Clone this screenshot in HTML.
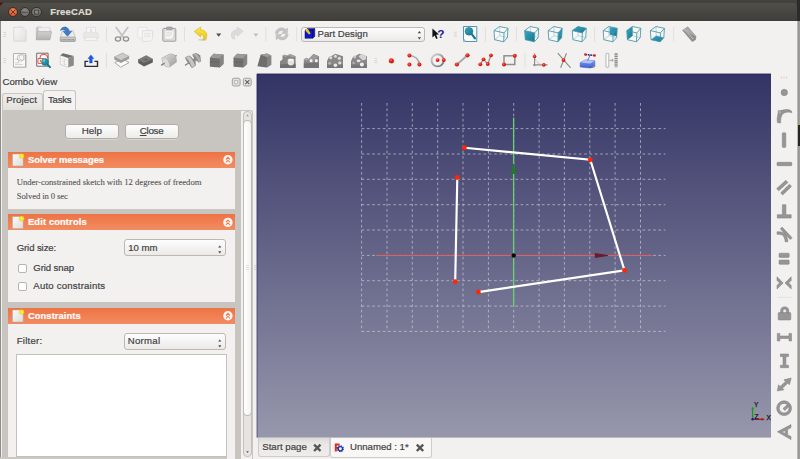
<!DOCTYPE html>
<html>
<head>
<meta charset="utf-8">
<title>FreeCAD</title>
<style>
html,body{margin:0;padding:0;}
body{width:800px;height:459px;overflow:hidden;position:relative;background:#f2f1f0;font-family:"Liberation Sans",sans-serif;font-size:9.6px;color:#424242;-webkit-text-stroke:0.2px currentColor;}
.abs{position:absolute;}
.t{position:absolute;white-space:nowrap;line-height:12px;height:12px;}
#topstrip{left:0;top:0;width:800px;height:8px;background:#42413c;}
#titlebar{left:0;top:2.7px;width:797.2px;height:18px;background:linear-gradient(#504f4a,#3e3d39);border-radius:4px 4px 0 0;}
#rstrip{left:797.2px;top:0;width:2.8px;height:459px;background:linear-gradient(90deg,#cfccc8 0,#8e8e8e 55%,#a9a8a6 100%);}
#lborder{left:0;top:20.5px;width:1.2px;height:439px;background:#8c8b88;}
.wbtn{position:absolute;width:10.6px;height:10.6px;border-radius:50%;top:6.8px;box-sizing:border-box;border:0.8px solid #33322e;}
.hdr{position:absolute;left:8px;width:227.2px;height:16.2px;background:linear-gradient(#ee7344,#f28c62);}
.hdr .t{left:20px;top:2.2px;color:#fff;font-weight:bold;font-size:9.3px;}
.pnl{position:absolute;left:8px;width:227.2px;background:#f2f1f0;}
.btn{position:absolute;height:15.8px;border:1px solid #b2ada6;border-radius:3px;background:linear-gradient(#fdfdfd,#ececeb);box-sizing:border-box;box-shadow:0 0.6px 0.6px rgba(255,255,255,0.6);}
.combo{position:absolute;height:16.2px;border:1px solid #bdb8b1;border-radius:3px;background:linear-gradient(#fdfdfd,#ebeae9);box-sizing:border-box;}
.chk{position:absolute;left:18.2px;width:9.3px;height:9px;border:1px solid #b9b4ad;border-radius:2px;background:#fff;box-sizing:border-box;}
</style>
</head>
<body>
<div id="topstrip" class="abs"></div>
<div id="rstrip" class="abs"></div>
<div class="abs" style="left:797.2px;top:0;width:2.8px;height:21px;background:#2b2b29;"></div>
<div class="abs" style="left:797.6px;top:124px;width:2.4px;height:21px;background:#262624;border-top:1px solid #b8a820;"></div>
<div id="titlebar" class="abs"></div>
<div class="wbtn" style="left:7.7px;background:radial-gradient(circle at 50% 35%,#f08a5e,#e2562c 70%,#b8431f);"></div>
<div class="wbtn" style="left:19.5px;background:radial-gradient(circle at 50% 35%,#8b8a84,#6f6e68 70%,#55544f);"></div>
<div class="wbtn" style="left:31.3px;background:radial-gradient(circle at 50% 35%,#8b8a84,#6f6e68 70%,#55544f);"></div>
<div class="t" style="left:50.3px;top:5.9px;color:#dfdbd2;font-weight:bold;font-size:9.5px;letter-spacing:0.14px;">FreeCAD</div>
<div id="lborder" class="abs"></div>

<!-- dock title -->
<div class="t" style="left:2.4px;top:76.1px;font-size:9.7px;">Combo View</div>

<!-- tab widget -->
<div class="abs" style="left:2px;top:109.5px;width:251px;height:349.5px;box-sizing:border-box;border:1px solid #c9c5bf;border-bottom:none;border-radius:0 3px 0 0;background:#f2f1f0;"></div>
<div class="abs" style="left:2.4px;top:110.6px;width:238.4px;height:348.4px;background:#c8c4bf;"></div>
<div class="abs" style="left:2px;top:93px;width:41.2px;height:17px;box-sizing:border-box;border:1px solid #c9c5bf;border-bottom:none;border-radius:3px 3px 0 0;background:linear-gradient(#efeeec,#e3e1de);"></div>
<div class="abs" style="left:43.4px;top:90.3px;width:32.8px;height:20px;box-sizing:border-box;border:1px solid #c9c5bf;border-bottom:none;border-radius:3px 3px 0 0;background:#f4f3f2;"></div>
<div class="t" style="left:6.2px;top:93.8px;font-size:9.7px;letter-spacing:0.09px;">Project</div>
<div class="t" style="left:48px;top:93.6px;font-size:9.7px;letter-spacing:-0.3px;">Tasks</div>

<!-- scrollbar -->
<div class="abs" style="left:243.2px;top:111px;width:8.6px;height:345.8px;box-sizing:border-box;border:1px solid #c4c0ba;border-radius:4px;background:#e6e4e1;"></div>
<div class="abs" style="left:243.2px;top:119.6px;width:8.6px;height:296px;box-sizing:border-box;border:1px solid #bdb9b3;border-radius:4px;background:linear-gradient(90deg,#ffffff,#f3f2f1);"></div>

<!-- buttons -->
<div class="btn" style="left:64.8px;top:123.5px;width:54px;"></div>
<div class="btn" style="left:124.5px;top:123.5px;width:54px;"></div>
<div class="t" style="left:81.8px;top:125.3px;font-size:9.8px;">Help</div>
<div class="t" style="left:139.8px;top:125.3px;font-size:9.8px;letter-spacing:-0.3px;"><span style="text-decoration:underline">C</span>lose</div>

<!-- Solver messages -->
<div class="hdr" style="top:151.5px;"><div class="t">Solver messages</div></div>
<div class="pnl" style="top:167.7px;height:41px;"></div>
<div class="t" style="left:16.7px;top:175.9px;font-family:'Liberation Serif',serif;font-size:8.7px;letter-spacing:-0.035px;color:#555;-webkit-text-stroke:0.1px #555;">Under-constrained sketch with 12 degrees of freedom</div>
<div class="t" style="left:16.7px;top:189.9px;font-family:'Liberation Serif',serif;font-size:8.7px;letter-spacing:-0.12px;color:#555;-webkit-text-stroke:0.1px #555;">Solved in 0 sec</div>

<!-- Edit controls -->
<div class="hdr" style="top:214.1px;"><div class="t" style="letter-spacing:0.15px;">Edit controls</div></div>
<div class="pnl" style="top:230.3px;height:71.6px;"></div>
<div class="t" style="left:16.7px;top:241.8px;letter-spacing:-0.11px;">Grid size:</div>
<div class="combo" style="left:124.4px;top:239.4px;width:101.4px;"></div>
<div class="t" style="left:128.2px;top:241.8px;">10 mm</div>
<div class="chk" style="top:263.5px;"></div>
<div class="t" style="left:33.3px;top:261.5px;letter-spacing:-0.1px;">Grid snap</div>
<div class="chk" style="top:281.8px;"></div>
<div class="t" style="left:33.3px;top:280px;letter-spacing:0.2px;">Auto constraints</div>

<!-- Constraints -->
<div class="hdr" style="top:307.5px;"><div class="t" style="letter-spacing:0.1px;">Constraints</div></div>
<div class="pnl" style="top:323.7px;height:135.3px;"></div>
<div class="t" style="left:16.7px;top:335.4px;letter-spacing:0.23px;">Filter:</div>
<div class="combo" style="left:124.4px;top:333.4px;width:101.4px;"></div>
<div class="t" style="left:127.8px;top:335.4px;letter-spacing:0.27px;">Normal</div>
<div class="abs" style="left:16.4px;top:354.2px;width:210.4px;height:103px;box-sizing:border-box;border:1px solid #c4c0ba;background:#fff;"></div>
<div class="abs" style="left:0;top:456.8px;width:227px;height:2.2px;background:#cbc8c4;"></div>

<!-- combobox workbench -->
<div class="combo" style="left:301.3px;top:26.8px;width:124px;height:15.2px;"></div>
<div class="t" style="left:317.6px;top:28.3px;font-size:9.6px;">Part Design</div>

<!-- bottom tabs -->
<div class="abs" style="left:257.5px;top:438px;width:72.5px;height:18.6px;box-sizing:border-box;border:1px solid #cfccc7;border-top:none;border-radius:0 0 3px 3px;background:linear-gradient(#dddbd8,#ebe9e7 35%,#efedeb);"></div>
<div class="abs" style="left:329.6px;top:437.5px;width:102.4px;height:20px;box-sizing:border-box;border:1px solid #cfccc7;border-top:none;border-radius:0 0 3px 3px;background:#f8f7f6;"></div>
<div class="t" style="left:262.2px;top:441.3px;font-size:9.7px;">Start page</div>
<div class="t" style="left:350px;top:441.3px;font-size:9.6px;">Unnamed : 1*</div>

<svg class="abs" style="left:0;top:0;" width="800" height="459" viewBox="0 0 800 459">
<defs>
<linearGradient id="vbg" x1="0" y1="0" x2="0" y2="1"><stop offset="0" stop-color="#333365"/><stop offset="1" stop-color="#9797ac"/></linearGradient>
<linearGradient id="tealg" x1="0" y1="0" x2="1" y2="1"><stop offset="0" stop-color="#3aa6c0"/><stop offset="1" stop-color="#14788f"/></linearGradient>
</defs>
<!-- VIEWPORT -->
<rect x="256.700" y="73.700" width="514.300" height="363.900" fill="url(#vbg)"/>
<path d="M257.100 437.600V74.100H771" fill="none" stroke="#1a1a58" stroke-opacity="0.6" stroke-width="0.800"/>
<g id="grid" stroke="#d8d8de" stroke-opacity="0.72" stroke-width="0.850" stroke-dasharray="2.700 2.600" fill="none">
<path d="M361.6 103V331.4M387 103V331.4M412.3 103V331.4M437.7 103V331.4M463 103V331.4M488.4 103V331.4M513.7 103V331.4M539.1 103V331.4M564.4 103V331.4M589.8 103V331.4M615.1 103V331.4M640.5 103V331.4"/>
<path d="M361.6 128.6H665.5M361.6 154H665.5M361.6 179.3H665.5M361.6 204.7H665.5M361.6 230H665.5M361.6 255.4H665.5M361.6 280.7H665.5M361.6 306.1H665.5M361.6 331.4H665.5"/>
</g>
<line x1="376" y1="255.500" x2="652" y2="255.500" stroke="#e2605a" stroke-width="1.100"/>
<line x1="513.6" y1="117.6" x2="513.6" y2="307" stroke="#66d468" stroke-width="1.3"/>
<path d="M594.8 252.9L594.8 258.1L608 255.9L608 255.1Z" fill="#6a1c2a"/>
<path d="M510.9 174L516.3 174L514 163.7L513.2 163.7Z" fill="#1f7a2a"/>
<circle cx="513.7" cy="255.5" r="2.2" fill="#0a0a14"/>
<g stroke="#ffffff" stroke-width="2.150" stroke-linecap="round" fill="none">
<path d="M464.4 147.7L590.3 159.8L624.5 270.4L478.4 292.1"/>
<path d="M457.3 177.5L455.2 281.6"/>
</g>
<g fill="#ff2600">
<circle cx="464.4" cy="147.7" r="2.4"/><circle cx="590.3" cy="159.8" r="2.4"/><circle cx="624.5" cy="270.4" r="2.4"/><circle cx="478.4" cy="292.1" r="2.4"/><circle cx="457.3" cy="177.5" r="2.4"/><circle cx="455.2" cy="281.6" r="2.4"/>
</g>
<!-- axis cross -->
<line x1="752.600" y1="419.300" x2="752.600" y2="408.500" stroke="#12a012" stroke-width="1.300"/>
<path d="M751.200 409.500l1.400-3l1.400 3z" fill="#12a012"/>
<line x1="752.600" y1="419.300" x2="762.500" y2="419.300" stroke="#a81c1c" stroke-width="1.300"/>
<path d="M761.500 417.900l3.600 1.400l-3.600 1.400z" fill="#a81c1c"/>
<circle cx="752.600" cy="419.300" r="1.200" fill="#1818a8"/>
<g font-family="Liberation Sans, sans-serif" font-size="6.600" fill="#181820" stroke="#181820" stroke-width="0.250">
<text x="753.900" y="406.900">Y</text><text x="754.600" y="418.700">Z</text><text x="766.500" y="419.700">X</text>
</g>
<path d="M0 2.700h3.200l-3.200 3.200z" fill="#5a0a10"/>
<path d="M10.800 9.900l4.300 4.300M15.100 9.900l-4.300 4.300" stroke="#5a2410" stroke-width="0.900" stroke-linecap="round"/>
<path d="M22.500 12.300h4.400" stroke="#45443f" stroke-width="1.100" stroke-linecap="round"/>
<rect x="34.500" y="10.100" width="4.200" height="4.200" fill="none" stroke="#45443f" stroke-width="0.900"/>
<line x1="106.5" y1="27" x2="106.5" y2="41.6" stroke="#e1dfdc" stroke-width="1"/>
<line x1="184.5" y1="27" x2="184.5" y2="41.6" stroke="#e1dfdc" stroke-width="1"/>
<line x1="265.9" y1="27" x2="265.9" y2="41.6" stroke="#e1dfdc" stroke-width="1"/>
<line x1="296.7" y1="27" x2="296.7" y2="41.6" stroke="#e1dfdc" stroke-width="1"/>
<line x1="485.4" y1="27" x2="485.4" y2="41.6" stroke="#e1dfdc" stroke-width="1"/>
<line x1="516.4" y1="27" x2="516.4" y2="41.6" stroke="#e1dfdc" stroke-width="1"/>
<line x1="594.6" y1="27" x2="594.6" y2="41.6" stroke="#e1dfdc" stroke-width="1"/>
<line x1="673.7" y1="27" x2="673.7" y2="41.6" stroke="#e1dfdc" stroke-width="1"/>
<line x1="106.5" y1="53" x2="106.5" y2="67.6" stroke="#e1dfdc" stroke-width="1"/>
<line x1="525" y1="53" x2="525" y2="67.6" stroke="#e1dfdc" stroke-width="1"/>
<path d="M3.4 32.5h2.8M3.4 34.5h2.8M3.4 36.5h2.8" stroke="#cfccc8" stroke-width="0.7"/>
<path d="M3.4 58.5h2.8M3.4 60.5h2.8M3.4 62.5h2.8" stroke="#cfccc8" stroke-width="0.7"/>
<path d="M453.90000000000003 32.3h2.8M453.90000000000003 34.3h2.8M453.90000000000003 36.3h2.8" stroke="#cfccc8" stroke-width="0.7"/>
<path d="M374.40000000000003 58.6h2.8M374.40000000000003 60.6h2.8M374.40000000000003 62.6h2.8" stroke="#cfccc8" stroke-width="0.7"/>
<path d="M781.5 76.4v2.6M784 76.4v2.6M786.5 76.4v2.6" stroke="#cfccc8" stroke-width="0.7"/>
<g transform="translate(494 26.1)" fill="none" stroke-linejoin="round"><path d="M0.0 4.5L10.0 6.8L9.7 15.7L0.6 13.6ZM0.0 4.5L5.6 0.4L14.0 2.2L10.0 6.8M14.0 2.2L13.4 11.6L9.7 15.7" fill="#fbfdfd" fill-opacity="0.6" stroke="none"/><path d="M5.8 9.6L5.6 0.4M5.8 9.6L13.4 11.6M5.8 9.6L0.6 13.6" stroke="#8fc0cb" stroke-width="0.6"/><path d="M0.0 4.5L10.0 6.8L9.7 15.7L0.6 13.6ZM0.0 4.5L5.6 0.4L14.0 2.2L10.0 6.8M14.0 2.2L13.4 11.6L9.7 15.7" stroke="#4393a6" stroke-width="0.850"/></g>
<g transform="translate(524.7 26.1)" fill="none" stroke-linejoin="round"><path d="M0.0 4.5L10.0 6.8L9.7 15.7L0.6 13.6ZM0.0 4.5L5.6 0.4L14.0 2.2L10.0 6.8M14.0 2.2L13.4 11.6L9.7 15.7" fill="#fbfdfd" fill-opacity="0.6" stroke="none"/><path d="M5.8 9.6L5.6 0.4M5.8 9.6L13.4 11.6M5.8 9.6L0.6 13.6" stroke="#8fc0cb" stroke-width="0.6"/><path d="M0.0 4.5L10.0 6.8L9.7 15.7L0.6 13.6Z" fill="url(#tealg)" stroke="none"/><path d="M0.0 4.5L10.0 6.8L9.7 15.7L0.6 13.6ZM0.0 4.5L5.6 0.4L14.0 2.2L10.0 6.8M14.0 2.2L13.4 11.6L9.7 15.7" stroke="#4393a6" stroke-width="0.850"/></g>
<g transform="translate(548.2 26.1)" fill="none" stroke-linejoin="round"><path d="M0.0 4.5L10.0 6.8L9.7 15.7L0.6 13.6ZM0.0 4.5L5.6 0.4L14.0 2.2L10.0 6.8M14.0 2.2L13.4 11.6L9.7 15.7" fill="#fbfdfd" fill-opacity="0.6" stroke="none"/><path d="M5.8 9.6L5.6 0.4M5.8 9.6L13.4 11.6M5.8 9.6L0.6 13.6" stroke="#8fc0cb" stroke-width="0.6"/><path d="M10.0 6.8L14.0 2.2L13.4 11.6L9.7 15.7Z" fill="url(#tealg)" stroke="none"/><path d="M0.0 4.5L10.0 6.8L9.7 15.7L0.6 13.6ZM0.0 4.5L5.6 0.4L14.0 2.2L10.0 6.8M14.0 2.2L13.4 11.6L9.7 15.7" stroke="#4393a6" stroke-width="0.850"/></g>
<g transform="translate(572.3 26.1)" fill="none" stroke-linejoin="round"><path d="M0.0 4.5L10.0 6.8L9.7 15.7L0.6 13.6ZM0.0 4.5L5.6 0.4L14.0 2.2L10.0 6.8M14.0 2.2L13.4 11.6L9.7 15.7" fill="#fbfdfd" fill-opacity="0.6" stroke="none"/><path d="M5.8 9.6L5.6 0.4M5.8 9.6L13.4 11.6M5.8 9.6L0.6 13.6" stroke="#8fc0cb" stroke-width="0.6"/><path d="M0.0 4.5L5.6 0.4L14.0 2.2L10.0 6.8Z" fill="url(#tealg)" stroke="none"/><path d="M0.0 4.5L10.0 6.8L9.7 15.7L0.6 13.6ZM0.0 4.5L5.6 0.4L14.0 2.2L10.0 6.8M14.0 2.2L13.4 11.6L9.7 15.7" stroke="#4393a6" stroke-width="0.850"/></g>
<g transform="translate(603.2 26.1)" fill="none" stroke-linejoin="round"><path d="M0.0 4.5L10.0 6.8L9.7 15.7L0.6 13.6ZM0.0 4.5L5.6 0.4L14.0 2.2L10.0 6.8M14.0 2.2L13.4 11.6L9.7 15.7" fill="#fbfdfd" fill-opacity="0.6" stroke="none"/><path d="M5.8 9.6L5.6 0.4M5.8 9.6L13.4 11.6M5.8 9.6L0.6 13.6" stroke="#8fc0cb" stroke-width="0.6"/><path d="M6.4 1.0L14.0 2.2L13.6 10.2L6.4 8.6Z" fill="url(#tealg)" stroke="none"/><path d="M0.0 4.5L10.0 6.8L9.7 15.7L0.6 13.6ZM0.0 4.5L5.6 0.4L14.0 2.2L10.0 6.8M14.0 2.2L13.4 11.6L9.7 15.7" stroke="#4393a6" stroke-width="0.850"/></g>
<g transform="translate(626.8 26.1)" fill="none" stroke-linejoin="round"><path d="M0.0 4.5L10.0 6.8L9.7 15.7L0.6 13.6ZM0.0 4.5L5.6 0.4L14.0 2.2L10.0 6.8M14.0 2.2L13.4 11.6L9.7 15.7" fill="#fbfdfd" fill-opacity="0.6" stroke="none"/><path d="M5.8 9.6L5.6 0.4M5.8 9.6L13.4 11.6M5.8 9.6L0.6 13.6" stroke="#8fc0cb" stroke-width="0.6"/><path d="M0.0 4.5L5.6 0.4L5.8 9.6L0.6 13.6Z" fill="url(#tealg)" stroke="none"/><path d="M0.0 4.5L10.0 6.8L9.7 15.7L0.6 13.6ZM0.0 4.5L5.6 0.4L14.0 2.2L10.0 6.8M14.0 2.2L13.4 11.6L9.7 15.7" stroke="#4393a6" stroke-width="0.850"/></g>
<g transform="translate(650.4 26.1)" fill="none" stroke-linejoin="round"><path d="M0.0 4.5L10.0 6.8L9.7 15.7L0.6 13.6ZM0.0 4.5L5.6 0.4L14.0 2.2L10.0 6.8M14.0 2.2L13.4 11.6L9.7 15.7" fill="#fbfdfd" fill-opacity="0.6" stroke="none"/><path d="M5.8 9.6L5.6 0.4M5.8 9.6L13.4 11.6M5.8 9.6L0.6 13.6" stroke="#8fc0cb" stroke-width="0.6"/><path d="M0.6 13.6L9.7 15.7L13.4 11.6L5.8 9.6Z" fill="url(#tealg)" stroke="none"/><path d="M0.0 4.5L10.0 6.8L9.7 15.7L0.6 13.6ZM0.0 4.5L5.6 0.4L14.0 2.2L10.0 6.8M14.0 2.2L13.4 11.6L9.7 15.7" stroke="#4393a6" stroke-width="0.850"/></g>
<!-- row1 left icons -->
<defs>
<linearGradient id="pg" x1="0" y1="0" x2="1" y2="1"><stop offset="0" stop-color="#f7f7f7"/><stop offset="1" stop-color="#e2e2e2"/></linearGradient>
<linearGradient id="fold" x1="0" y1="0" x2="0" y2="1"><stop offset="0" stop-color="#d0d0d0"/><stop offset="1" stop-color="#b2b2b2"/></linearGradient>
<linearGradient id="drv" x1="0" y1="0" x2="0" y2="1"><stop offset="0" stop-color="#d9d9d9"/><stop offset="1" stop-color="#a8a8a8"/></linearGradient>
<linearGradient id="yel" x1="0" y1="0" x2="0" y2="1"><stop offset="0" stop-color="#fbe84a"/><stop offset="1" stop-color="#e9c616"/></linearGradient>
<linearGradient id="dk" x1="0" y1="0" x2="1" y2="1"><stop offset="0" stop-color="#8e8e8e"/><stop offset="1" stop-color="#5a5a5a"/></linearGradient>
<radialGradient id="redb" cx="0.4" cy="0.35" r="0.7"><stop offset="0" stop-color="#ff6a5a"/><stop offset="0.5" stop-color="#ee1c12"/><stop offset="1" stop-color="#b40c08"/></radialGradient>
</defs>
<!-- new -->
<path d="M13.8 27.2h9.2l3 3v10.9h-12.2z" fill="url(#pg)" stroke="#d2d2d2" stroke-width="0.8"/>
<path d="M23 27.2v3h3" fill="#fafafa" stroke="#d6d6d6" stroke-width="0.6"/>
<!-- open -->
<path d="M36.3 28.2l1-1.3h4l1 1.3h7.6v11.4h-13.6z" fill="#c6c6c6" stroke="#b8b8b8" stroke-width="0.600"/>
<path d="M38.6 27.4h11.2v8h-11.2z" fill="#efefef" stroke="#d0d0d0" stroke-width="0.5"/>
<path d="M37.6 31.6h14l-1.8 8.2h-13.6z" fill="url(#fold)" stroke="#a6a6a6" stroke-width="0.6"/>
<!-- save -->
<path d="M62.600 30.800h10.400l2.400 6.600h-15.200z" fill="#ececec" stroke="#b4b4b4" stroke-width="0.700"/>
<rect x="60.200" y="37.200" width="15.200" height="4.300" rx="0.800" fill="url(#drv)" stroke="#9a9a9a" stroke-width="0.700"/>
<path d="M61.500 39.500h12.600" stroke="#7e7e7e" stroke-width="0.700" stroke-dasharray="0.800 0.500"/>
<path d="M60.600 30.400c0.600-3.400 5.600-4.800 8-1.200l0.500 2.200h2.500l-4.100 4.800l-4.200-4.800h2.500c-0.600-2-3.400-2.600-5.200-1z" fill="#3f7cc4" stroke="#2a5ea4" stroke-width="0.600" stroke-linejoin="round"/>
<!-- print -->
<rect x="86.400" y="27.600" width="9.200" height="5.800" fill="#f6f6f6" stroke="#d8d8d8" stroke-width="0.600"/>
<path d="M91 29v3.400" stroke="#d4d4d4" stroke-width="1.200"/>
<rect x="83.600" y="32.800" width="14.600" height="6" rx="1.400" fill="#e9e9e9" stroke="#d6d6d6" stroke-width="0.600"/>
<rect x="85" y="37.200" width="11.800" height="3.400" fill="#f3f3f3" stroke="#d8d8d8" stroke-width="0.600"/>
<!-- cut -->
<g stroke="#a2a2a2" fill="none" stroke-width="1.200" stroke-linecap="round">
<path d="M116.200 27.400l7.400 10.200M127.800 27.400l-7.400 10.200" stroke="#c2c2c2" stroke-width="1.700"/>
<ellipse cx="118" cy="39" rx="2.600" ry="2.100" stroke="#909090" stroke-width="1.300"/>
<ellipse cx="126" cy="39" rx="2.600" ry="2.100" stroke="#909090" stroke-width="1.300"/>
</g>
<!-- copy -->
<path d="M138 27.4h9v10.6h-9z" fill="#f7f7f7" stroke="#dedede" stroke-width="0.7"/>
<path d="M142.2 30.6h10.4v8.2l-2.4 2.6h-8z" fill="#f4f4f4" stroke="#d9d9d9" stroke-width="0.7"/>
<path d="M144 33.4h6.6M144 35h6.6M144 36.6h6.6" stroke="#e0e0e0" stroke-width="0.7"/>
<!-- paste -->
<rect x="162.800" y="28.400" width="13" height="12.800" rx="0.800" fill="#dedede" stroke="#9e9e9e" stroke-width="1"/>
<path d="M164.6 30.2h9.4v6.6l-2.6 2.6h-6.8z" fill="#f3f3f3" stroke="#bdbdbd" stroke-width="0.5"/>
<rect x="166.4" y="27" width="5.8" height="2.6" rx="0.8" fill="#aaaaaa" stroke="#8e8e8e" stroke-width="0.6"/>
<path d="M166 32.4h6M166 34h6M166 35.6h4.4" stroke="#d4d4d4" stroke-width="0.6"/>
<!-- undo -->
<ellipse cx="202.6" cy="39.8" rx="4.6" ry="1.1" fill="#000" fill-opacity="0.12"/>
<path d="M194.2 31.4l6.4-4.4v2.8c5.4 0.2 7.4 4.6 5.6 8.6c-0.8 1.2-2.2 1.6-3.6 1.4c1.6-1.6 1.6-5-2-5.4v2.6z" fill="url(#yel)" stroke="#d8b412" stroke-width="0.6" stroke-linejoin="round"/>
<path d="M216.2 33.4h5l-2.5 3.3z" fill="#4a4a4a"/>
<!-- redo disabled -->
<path d="M243.2 31.2l-6-4.2v2.8c-5 0.2-6.8 4.2-5.2 8c0.8 1 2 1.4 3.2 1.2c-1.4-1.6-1.4-4.6 2-5v2.4z" fill="#dcdcdc" stroke="#cfcfcf" stroke-width="0.6" stroke-linejoin="round"/>
<path d="M253.5 33.4h4.8l-2.4 3.3z" fill="#bdbdbd"/>
<!-- refresh disabled -->
<g fill="#c4c4c4" stroke="#b4b4b4" stroke-width="0.5" stroke-linejoin="round">
<path d="M275.4 33.4c0.4-5 7-7.4 10.2-3.8l1.8-1.6v5.4h-5.6l1.8-1.8c-1.8-2-5-1.2-5.6 1.8z"/>
<path d="M288.2 34.4c-0.4 5-7 7.4-10.2 3.8l-1.8 1.6v-5.4h5.6l-1.8 1.8c1.8 2 5 1.2 5.6-1.8z"/>
</g>
<!-- workbench combobox icon -->
<path d="M305 30.4l2.4-1.8h7.4v7.8l-2.2 1.9h-7.6z" fill="#1018c8" stroke="#080c60" stroke-width="0.5"/>
<path d="M305 30.4h7.6v7.9M312.6 30.4l2.2-1.8" fill="none" stroke="#050830" stroke-width="0.6"/>
<path d="M305.4 29l2.6 0l2.6 4.4l-1.6 1.2l-3.4-3.6z" fill="#e8c820"/>
<path d="M417.700 33.300h3.400l-1.700-2.200zM417.700 37.200h3.400l-1.700 2.200z" fill="#4a4a4a"/>
<!-- whats this -->
<path d="M432.4 28.6l0 8.8l2.2-2l1.6 3.6l1.5-0.7l-1.6-3.5l2.9-0.2z" fill="#111"/>
<text x="437.2" y="37.5" font-family="Liberation Sans, sans-serif" font-weight="bold" font-size="11.8" fill="#1a1aa0">?</text>
<!-- zoom fit -->
<path d="M463.5 26.5h13.3v15h-10.8l-2.5-2.5z" fill="#fbfbfb" stroke="#3c8fa3" stroke-width="0.9" stroke-linejoin="round"/>
<path d="M463.5 39v2.5h2.5" fill="none" stroke="#3c8fa3" stroke-width="0.6"/>
<circle cx="469" cy="31.300" r="3.900" fill="url(#tealg)" stroke="#14788f" stroke-width="0.600"/>
<path d="M472 34.400l3 3.900" stroke="#14788f" stroke-width="2.200" stroke-linecap="round"/>
<!-- ruler -->
<path d="M682.6 30.2l5.2-3.4l8.2 9.6l-0.6 3.4l-3.2 1.8z" fill="#a9a9a9" stroke="#8d8d8d" stroke-width="0.6" stroke-linejoin="round"/>
<path d="M682.6 30.2l9.6 11.4l3.2-1.8l0.6-3.4" fill="#8f8f8f" stroke="none"/>
<path d="M684.6 29.2l8.6 10" stroke="#c9c9c9" stroke-width="1.6" stroke-dasharray="0.8 0.9"/>

<!-- row2 icons -->
<defs>
<linearGradient id="bx1" x1="0" y1="0" x2="0" y2="1"><stop offset="0" stop-color="#8a8a8a"/><stop offset="1" stop-color="#666666"/></linearGradient>
<linearGradient id="bx2" x1="0" y1="0" x2="1" y2="1"><stop offset="0" stop-color="#a6a6a6"/><stop offset="1" stop-color="#7e7e7e"/></linearGradient>
<linearGradient id="cyl" x1="0" y1="0" x2="1" y2="1"><stop offset="0" stop-color="#e0e0e0"/><stop offset="1" stop-color="#9a9a9a"/></linearGradient>
<linearGradient id="blu" x1="0" y1="0" x2="0" y2="1"><stop offset="0" stop-color="#7f9cf0"/><stop offset="1" stop-color="#3a60d8"/></linearGradient>
<linearGradient id="ring" x1="0" y1="0" x2="1" y2="1"><stop offset="0" stop-color="#d8d8d8"/><stop offset="1" stop-color="#6e6e6e"/></linearGradient>
</defs>
<!-- 1 sketch -->
<path d="M14.600 54.600h12v13h-12z" fill="#c0c0c0"/>
<path d="M13.500 53.500h12v13.600h-12z" fill="#f9f9f9" stroke="#a2a2a2" stroke-width="0.800"/>
<circle cx="20.600" cy="57.900" r="3.300" fill="none" stroke="#b2b2b2" stroke-width="0.800"/>
<circle cx="22.200" cy="57.200" r="2.900" fill="none" stroke="#c4c4c4" stroke-width="0.700"/>
<path d="M15.200 59.200h3.400v3.600h-3.400M15.200 64.400h7.600" fill="none" stroke="#c0c0c0" stroke-width="0.700"/>
<!-- 2 sketch view -->
<path d="M36.700 53.200h11.400v13h-11.400z" fill="#fbfbfb" stroke="#5c5c5c" stroke-width="0.900"/>
<path d="M39.800 58.200a4 4 0 0 1 8 0" fill="none" stroke="#ee3a28" stroke-width="1"/>
<path d="M38 58.500h5.400v4.900h-5.400zM40.600 60v2" fill="none" stroke="#ee4a38" stroke-width="0.900"/>
<path d="M47.300 64.400l2.700 2.700" stroke="#117388" stroke-width="2" stroke-linecap="round"/>
<circle cx="45" cy="61.900" r="3.500" fill="url(#tealg)" stroke="#117388" stroke-width="0.500"/>
<circle cx="44" cy="60.800" r="1.200" fill="#7fd0e0" fill-opacity="0.7"/>
<!-- 3 box on doc -->
<path d="M60.300 55.300l8.100 2.700v9.300l-8.100-2.800z" fill="#f6f6f6" stroke="#bdbdbd" stroke-width="0.600" stroke-linejoin="round"/>
<path d="M61.800 58.600l4.600 1.500M61.800 61l3.600 1.200M63 63.600l3.600 1.400M64.600 59v6" stroke="#cfcfcf" stroke-width="0.600"/>
<path d="M60.300 55.300l2.600-2l10.900 2.600l-5.400 2.100z" fill="#6e6e6e"/>
<path d="M68.400 58l5.400-2.100v9.600l-5.400 1.800z" fill="#8a8a8a"/>
<!-- 4 export -->
<path d="M88.200 61.400h-3.100v5h12.400v-5h-3.100" fill="none" stroke="#2a2e38" stroke-width="1.400"/>
<path d="M90.900 54.900l2.900 3.600h-1.600v4.400h-2.600v-4.400h-1.600z" fill="#1a5aea" stroke="#0c40c0" stroke-width="0.400" stroke-linejoin="round"/>
<!-- 5 pad -->
<path d="M114.8 62.6l5.8 4.6l8.4-4.6l-6.6-3.8z" fill="#fafafa" stroke="#8a8a8a" stroke-width="0.7" stroke-linejoin="round"/>
<path d="M114.3 57v2.400l6.600 3.600l8.200-4.200v-2.400z" fill="#9a9a9a"/>
<path d="M114.3 57l8.3-4l6.5 3.4l-8.2 4z" fill="#cacaca" stroke="#909090" stroke-width="0.500" stroke-linejoin="round"/>
<!-- 6 pocket -->
<path d="M138.2 59.8v3.2l5.8 3.6l8.8-4v-3.4z" fill="#5e5e5e"/>
<path d="M138.2 59.8l8-4.2l6.6 3.6l-8.8 4z" fill="#7c7c7c" stroke="#5c5c5c" stroke-width="0.5" stroke-linejoin="round"/>
<path d="M142.6 59.6l3.4-1.7l2.6 1.5l-3.4 1.6z" fill="#6a6a6a"/>
<!-- 7 revolve -->
<path d="M161.300 65.300l15.300-10" stroke="#8e8e8e" stroke-width="1.300"/>
<path d="M161.900 58.100l7.500-4.100c3.400-0.400 6.400 1 6.600 2.900l0.600 5l-6.900 5c-3.400 0.400-6-1.600-6.600-3.500z" fill="url(#cyl)" stroke="#a2a2a2" stroke-width="0.500"/>
<path d="M161.900 58.100c1.800-0.800 5.200 0.400 6.200 2.600c1 2.200 2 4.600 1.600 6.200c-3.400 0.400-6-1.600-6.600-3.500z" fill="#dcdcdc" stroke="#b0b0b0" stroke-width="0.400"/>
<path d="M161.300 65.300l3.400-2.200" stroke="#858585" stroke-width="1.300"/>
<!-- 8 groove -->
<path d="M185.200 65.200l15-9.800" stroke="#8c8c8c" stroke-width="1.100"/>
<path d="M185.400 57.500l3.400-1.600c2 0.600 3.400 2 3.800 3.400l2.600-0.200c-1.200-1.600-2.400-3.200-2.400-4.700l2.800-1c2.400 0.400 4.200 1.600 4.400 2.900l0.600 5l-1.800 0.900c-1-1-2.200-2-3.600-2.400l0.200 5.800l-3.500 2.200c-1-1.600-1.800-2.600-1.900-3.400c-2.200-1.600-4-4.800-4.600-6.900z" fill="#8e8e8e" stroke="#6a6a6a" stroke-width="0.500" stroke-linejoin="round"/>
<path d="M185.400 57.500l3.400-1.600c2.600 1.800 5.400 6 6.200 9.700l-3.100 2.200c-0.600-3.600-3.400-8.300-6.500-10.300z" fill="#c4c4c4"/>
<path d="M192.800 54.400l2.800-1c2.600 1.400 4.600 4.600 5 7.900l-1.800 0.900c-0.800-3.200-3-6.400-6-7.800z" fill="#b0b0b0"/>
<path d="M185.200 65.200l4-2.600" stroke="#8c8c8c" stroke-width="1.100"/>
<!-- 9 fillet box -->
<g id="dkbox">
<path d="M209.900 57.800l3.600-4l10 0.800v9.400l-3.800 3.400l-9.800-0.600z" fill="#707070"/>
<path d="M209.900 57.800l3.600-4l10 0.800l-3.800 4z" fill="#9a9a9a"/>
<path d="M219.700 58.600l3.800-4v9.400l-3.800 3.400z" fill="#858585"/>
<path d="M209.900 62h9.800" stroke="#5a5a5a" stroke-width="0.5"/>
</g>
<!-- 10 chamfer -->
<use href="#dkbox" x="23.600" y="0"/>
<!-- 11 draft -->
<path d="M257.400 66.200l3.200-11.400l6.400-1.200l4.200 2v9.200l-4.400 2.800z" fill="#6e6e6e"/>
<path d="M260.600 54.800l6.400-1.200l4.200 2l-4 1.600z" fill="#9c9c9c"/>
<path d="M267.200 57.200l4-1.600v9.200l-4.400 2.800z" fill="#858585"/>
<!-- 12-15 pattern icons -->
<path d="M280 68v-6.700l2.500-1.900v-3.800l1.900-0.900l3.100 0.900l2.500-1.600l5.600 2.300v11.700z" fill="#868686"/>
<path d="M280 64.500l15.600-1v4.500h-15.600z" fill="#707070"/>
<path d="M282.500 55.600l1.900-0.900l3.100 0.900l-1.800 1.600zM287.500 55.600l2.500-1.600l5.600 2.300l-3 1z" fill="#a2a2a2"/>
<ellipse cx="290.900" cy="62.600" rx="3.100" ry="2.900" fill="#e4e4e4"/>
<rect x="287.800" y="60" width="6.200" height="2.800" fill="#e4e4e4"/>
<ellipse cx="290.900" cy="60" rx="3.100" ry="1.300" fill="#f8f8f8" stroke="#c4c4c4" stroke-width="0.300"/>
<g id="pat">
<path d="M303.800 68v-8.600l2.500-1.600l2.500 1.200l4.600-5l5.600 2.300v11.700z" fill="#878787"/>
<path d="M303.800 63.500l15.200-0.800v5.300h-15.200z" fill="#747474"/>
<path d="M308.800 59l4.600-5l5.600 2.300l-4.800 4z" fill="#9a9a9a"/>
<path d="M303.800 59.400l2.500-1.600l2.500 1.200l-2.300 1.900z" fill="#a8a8a8"/>
</g>
<circle cx="311.100" cy="60.700" r="1.600" fill="#eeeeee"/><circle cx="316.300" cy="60.700" r="1.600" fill="#eeeeee"/>
<path d="M327 68v-6.700l1.900-4.400l2.500-0.900l4-2.200l7.600 2.500v11.700z" fill="#888"/>
<path d="M327 64.800l16-0.600v3.800h-16z" fill="#777"/>
<g fill="#dcdcdc"><circle cx="330.800" cy="57.700" r="1.500"/><circle cx="335.400" cy="56.300" r="1.500"/><circle cx="339.300" cy="58.300" r="1.600"/><circle cx="339.800" cy="62.900" r="1.600"/><circle cx="335.400" cy="65.300" r="1.800" fill="#ececec"/><circle cx="329.600" cy="63.400" r="1.300" fill="#b8b8b8"/></g>
<path d="M351 68v-6.700l1.900-4.400l2.500-0.900l4-2.200l7.600 2.500v11.700z" fill="#888"/>
<path d="M351 64.800l16-0.600v3.800h-16z" fill="#777"/>
<path d="M358.400 56.200l3.600-2.400l4.200 1.800v3.600l-3.600 1.400z" fill="#d4d4d4"/>
<g fill="#e6e6e6"><circle cx="354.800" cy="57" r="1.500" fill="#c8c8c8"/><ellipse cx="358.600" cy="60.800" rx="2" ry="1.400"/><circle cx="361.900" cy="64.600" r="2" fill="#f0f0f0"/><circle cx="353.600" cy="63" r="1.200" fill="#b0b0b0"/></g>
<!-- sketch geometry icons -->
<g fill="url(#redb)">
<ellipse cx="392" cy="61.600" rx="2.400" ry="2.200" fill="#000" fill-opacity="0.18"/>
<circle cx="391.300" cy="60.800" r="2.500"/>
<path d="M409.400 55.500c5.400 0.400 9.400 3.800 10 9" fill="none" stroke="#a6a6a6" stroke-width="1.700"/>
<circle cx="409.400" cy="55.500" r="2"/><circle cx="409.400" cy="64.600" r="2"/><circle cx="419.400" cy="64.600" r="2"/>
<circle cx="437.600" cy="60.300" r="6.100" fill="none" stroke="url(#ring)" stroke-width="1.900"/>
<circle cx="437.600" cy="60.100" r="1.900"/><circle cx="443.800" cy="60.100" r="1.900"/>
<path d="M456.900 64.500l10.600-9.200" stroke="#a8a8a8" stroke-width="1.900"/>
<circle cx="456.900" cy="64.500" r="2.100"/><circle cx="467.500" cy="55.300" r="2.100"/>
<path d="M480.300 64.300l3.200-5l4.300 4.700l3.200-8.700" fill="none" stroke="#9a9a9a" stroke-width="1.400"/>
<circle cx="480.300" cy="64.300" r="1.900"/><circle cx="483.500" cy="59.300" r="1.900"/><circle cx="487.800" cy="64" r="1.900"/><circle cx="491" cy="55.300" r="1.900"/>
<rect x="504" y="55.800" width="10.800" height="8.700" fill="none" stroke="#8e8e8e" stroke-width="1.500"/>
<circle cx="504" cy="64.500" r="2"/><circle cx="514.800" cy="55.800" r="2"/>
<path d="M534.600 53.400v12.800M533 64.900h14.600" fill="none" stroke="#8a8a8a" stroke-width="1.100"/>
<path d="M534.600 57c1 4.800 4 7.400 9 7.900" fill="none" stroke="#a0a0a0" stroke-width="0.800" stroke-dasharray="1 0.800"/>
<circle cx="534.600" cy="56.500" r="1.800"/><circle cx="543.800" cy="64.900" r="1.800"/>
<path d="M557.800 53.200l12.800 14.600M566.500 53.200l-5.900 14.600" stroke="#8a8a8a" stroke-width="1.100"/>
<circle cx="563.500" cy="60.100" r="1.900"/>
</g>
<!-- external geometry -->
<path d="M580.200 62.600l5.400-2.800l9.200 1v4.600l-4.800 2.600l-9.800-1z" fill="url(#blu)" stroke="#3a54b8" stroke-width="0.500" stroke-linejoin="round"/>
<path d="M580.200 62.600l5.400-2.800l9.200 1l-4.800 2.600z" fill="#b4c2f6"/>
<path d="M590 67.600c2.600 0 5-0.600 5.600-1.800" stroke="#555" stroke-width="0.800" fill="none"/>
<path d="M590.200 55l-2.600 5.800" stroke="#4a5ab0" stroke-width="0.800"/>
<path d="M585.600 54.500l8.800 1" stroke="#1a1a90" stroke-width="1.400" stroke-dasharray="1.600 0.800"/>
<circle cx="585.400" cy="54.500" r="1.300" fill="#e82010"/><circle cx="594.600" cy="55.500" r="1.300" fill="#e82010"/>
<!-- construction -->
<rect x="606" y="53.300" width="2.800" height="14" rx="0.800" fill="#fdfdfd" stroke="#9a9a9a" stroke-width="0.700"/>
<path d="M616.100 53.300v14" stroke="#8a8a8a" stroke-width="3.200" stroke-dasharray="1.500 0.700"/>
<path d="M609.400 60.300h3.600M611.800 59l1.600 1.300l-1.600 1.300" stroke="#8a8a8a" stroke-width="0.700" fill="none"/>

<!-- right toolbar -->
<g fill="#969696" stroke="#7c7c7c" stroke-width="0.500" stroke-linejoin="round">
<circle cx="784.300" cy="92.500" r="3.200"/>
<!-- coincident -->
<path d="M777.400 122.600c-0.600-3.800 0-8 1.800-10.800c3.600-2.600 9-3 12.300-0.800l0.400 1.700c-3.400-1.200-7-0.600-9.400 1.400c-1.600 2.400-2 5.600-1.800 9z"/>
<rect x="778.200" y="110.600" width="3.600" height="3.600" fill="#aaa"/>
<!-- vertical -->
<rect x="782.300" y="132.800" width="3.500" height="14.600" rx="0.800"/>
<!-- horizontal -->
<rect x="777" y="162.300" width="14.800" height="3.400" rx="0.800"/>
<!-- parallel -->
<path d="M776.700 188.600l9.200-8.300l2 2.200l-9.200 8.300zM780.700 192.800l8.800-8.600l2 2.200l-8.800 8.600z"/>
<!-- perpendicular -->
<path d="M782.400 204.700h3.500v10h5.300v3.400h-13.900v-3.400h5.100z"/>
<!-- tangent -->
<path d="M780.300 228.900l1.800-1.800l10 10.700l-1.800 1.800z"/>
<path d="M777 231.800c4.400-0.400 7.400 0.800 9 3.400c1.200 2 1.800 4.200 1.900 6.500l-2.700 0.200c-0.100-2-0.500-3.700-1.400-5.200c-1.200-1.800-3.400-2.600-6.600-2.300z"/>
<!-- equal -->
<rect x="779" y="253.200" width="10.200" height="4.200" rx="0.800"/>
<rect x="779" y="260.100" width="10.200" height="4.200" rx="0.800"/>
<!-- symmetric -->
<path d="M777 276.800l6.200 6.100l-6.200 6.100v-3.600l2.500-2.500l-2.500-2.500zM791.200 276.800l-6.200 6.100l6.200 6.100v-3.600l-2.500-2.500l2.500-2.500z"/>
<!-- lock -->
<path d="M780.600 313v-2.400c0-5 8.200-5 8.200 0v2.400h-2.400v-2.200c0-2.200-3.400-2.200-3.400 0v2.200z"/>
<rect x="778.200" y="312.600" width="12.600" height="7.400" rx="0.800"/>
<!-- horizontal distance -->
<path d="M777.300 333.400h2.500v2.600h9.200v-2.600h2.500v7.600h-2.500v-2.500h-9.200v2.500h-2.500z"/>
<!-- vertical distance -->
<path d="M780.400 354h8.100v2.500h-2.600v8.700h2.600v2.500h-8.100v-2.500h2.600v-8.700h-2.600z"/>
<!-- distance diagonal -->
<path d="M777.300 391l1.200-6.200l1.600 1.600l5.400-5l-1.600-1.600l7.300-1.800l-1.800 6.800l-1.600-1.600l-5.400 5l1.600 1.600z"/>
<!-- radius -->
<path d="M784.100 400.800a7.400 7.400 0 1 0 0.010 0zM784.100 403.400a4.800 4.800 0 1 1 -0.010 0z" fill-rule="evenodd"/>
<path d="M783 408.600l4.600-4.400l1.800 1.900l-4.600 4.400z"/>
<!-- angle -->
<path d="M777.400 431.800l13.600-7.200v3l-3.400 1.800v5.400l3.400 1.800v3zM785.200 430.600l-3.400 1.400l3.400 1.500z" fill-rule="evenodd"/>
</g>
<line x1="777" y1="297.400" x2="791.500" y2="297.400" stroke="#e0deda" stroke-width="0.800"/>

<!-- panel decorations -->
<defs>
<linearGradient id="docg" x1="0" y1="0" x2="1" y2="1"><stop offset="0" stop-color="#fafafa"/><stop offset="1" stop-color="#dcdcdc"/></linearGradient>
<radialGradient id="ydot" cx="0.5" cy="0.5" r="0.5"><stop offset="0" stop-color="#fff36a"/><stop offset="0.6" stop-color="#f6e21e"/><stop offset="1" stop-color="#f0d020" stop-opacity="0.7"/></radialGradient>
<g id="hdricon">
<rect x="12.500" y="2.500" width="10.600" height="12" fill="url(#docg)" stroke="#b9a69a" stroke-width="0.500"/>
<circle cx="21.600" cy="4.600" r="2.700" fill="url(#ydot)"/>
<circle cx="227.900" cy="8.300" r="4.700" fill="#fdf9f7"/>
<path d="M225.900 8l2-2.100l2 2.100M225.900 10.800l2-2.100l2 2.100" fill="none" stroke="#ee7b4c" stroke-width="1.100"/>
</g>
</defs>
<use href="#hdricon" x="0" y="151.500"/>
<use href="#hdricon" x="0" y="214.100"/>
<use href="#hdricon" x="0" y="307.500"/>
<!-- dock buttons -->
<rect x="232.300" y="78.200" width="7.800" height="7.800" rx="1.700" fill="#e2e1df" stroke="#9a9894" stroke-width="0.900"/>
<rect x="243.400" y="78.200" width="7.800" height="7.800" rx="1.700" fill="#e2e1df" stroke="#9a9894" stroke-width="0.900"/>
<path d="M236.200 80l2 2.100l-2 2.100l-2-2.100z" fill="#f4f3f2" stroke="#9e9c98" stroke-width="0.700"/><path d="M234 80l0.800 0.800M238.400 80l-0.800 0.800M234 84.200l0.800-0.800M238.400 84.200l-0.800-0.800" stroke="#9e9c98" stroke-width="0.700"/>
<path d="M245.300 80.100l4 4M249.300 80.100l-4 4" stroke="#5e5c58" stroke-width="1.050"/>
<!-- combobox arrows -->
<path d="M218.200 247.600h3.200l-1.600-2.200zM218.200 251.300h3.200l-1.600 2.200z" fill="#4a4a4a"/>
<path d="M218.200 341.600h3.200l-1.600-2.200zM218.200 345.300h3.200l-1.600 2.200z" fill="#4a4a4a"/>
<!-- scrollbar arrows / grips -->
<path d="M246.200 116.200h2.600l-1.300-1.700z" fill="#9a9793"/>
<path d="M246.200 451.200h2.600l-1.300 1.700z" fill="#55534f"/>
<path d="M246 265.500h3M246 267.500h3M246 269.500h3" stroke="#d4d1cd" stroke-width="0.700"/>
<path d="M254.200 265.500h1.800M254.200 267.500h1.800M254.200 269.500h1.800" stroke="#c9c6c2" stroke-width="0.700"/>
<!-- tab close icons -->
<g stroke="#565656" stroke-width="2.400" stroke-linecap="butt">
<path d="M314.100 444.600l6.400 6.400M320.500 444.600l-6.400 6.400"/>
<path d="M416.800 444.600l6.400 6.400M423.200 444.600l-6.400 6.400"/>
</g>
<!-- freecad doc icon -->
<path d="M334.800 443.600h4.800v2h-2.800v1.400h2v1.800h-2v2.800h-2z" fill="#e02a18"/>
<circle cx="340.400" cy="448.700" r="2.700" fill="none" stroke="#1838b0" stroke-width="1.700" stroke-dasharray="1.200 0.900"/>
<circle cx="340.400" cy="448.700" r="2.100" fill="none" stroke="#1838b0" stroke-width="1.300"/>


</svg>
</body>
</html>
